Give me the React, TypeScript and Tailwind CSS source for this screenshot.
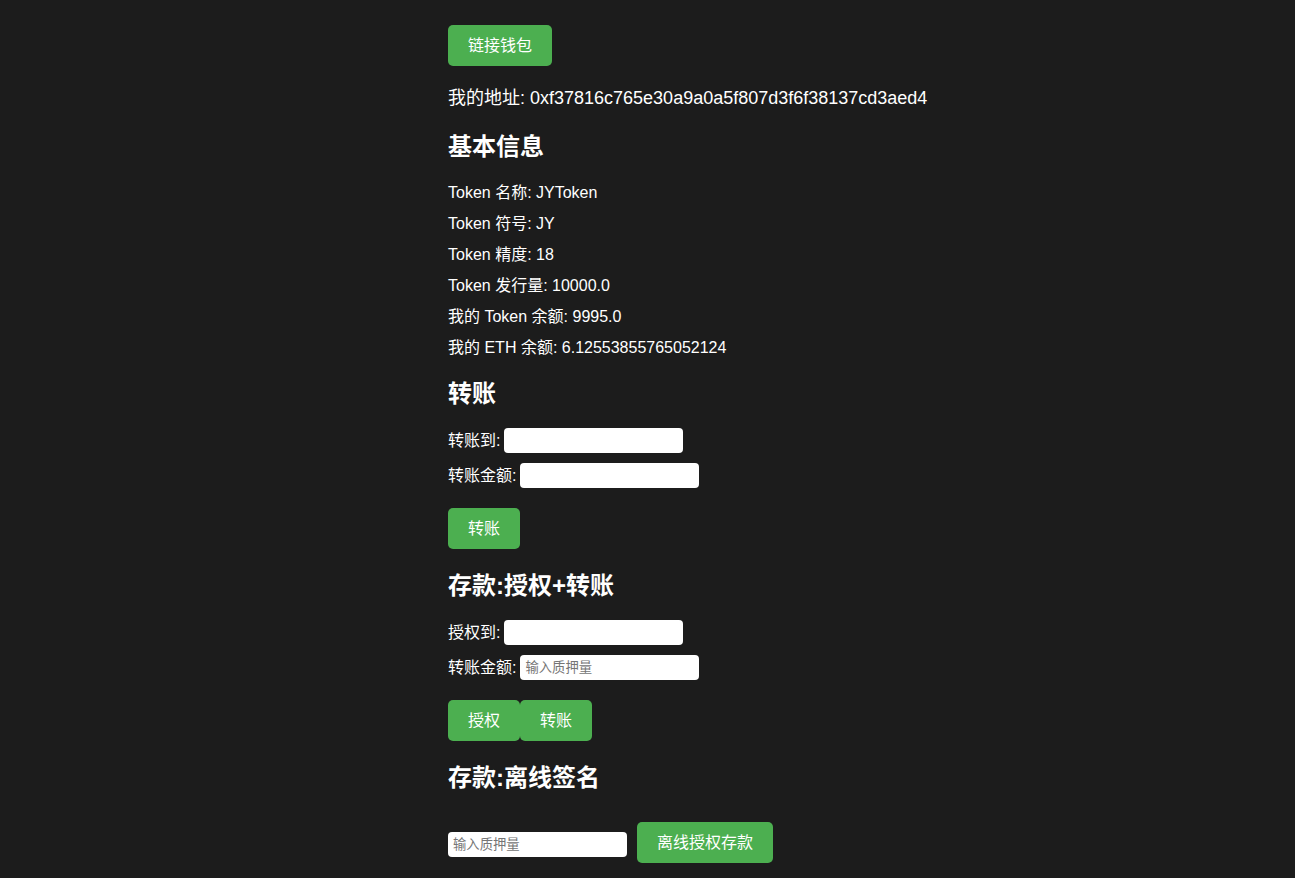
import React from "react";

const infoRows = [
  "Token 名称: JYToken",
  "Token 符号: JY",
  "Token 精度: 18",
  "Token 发行量: 10000.0",
  "我的 Token 余额: 9995.0",
  "我的 ETH 余额: 6.12553855765052124",
];

const btn =
  "bg-[#4caf50] text-white text-[16px] leading-[21px] py-[10px] px-[20px] rounded-[5px] whitespace-nowrap";
const input =
  "w-[179px] h-[25px] bg-white rounded-[4px] px-[5px] text-[13.33px] text-black placeholder:text-[#757575] outline-none";
const h2 = "text-[24px] leading-[32px] font-bold";

function Field({ label, placeholder }: { label: string; placeholder?: string }) {
  return (
    <div className="h-[25px] flex items-center text-[16px] whitespace-nowrap">
      <span>{label}</span>
      <input className={`${input} ml-[4px]`} placeholder={placeholder} />
    </div>
  );
}

export default function App() {
  return (
    <main className="min-h-screen bg-[#1c1c1c] text-white font-['Liberation_Sans','Noto_Sans_CJK_SC',sans-serif] pb-[40px]">
      <div className="mx-auto w-[399px] pt-[25px] flex flex-col items-start">
        <button className={btn}>链接钱包</button>

        <p className="mt-[20px] text-[18px] leading-[24px] whitespace-nowrap">
          我的地址: 0xf37816c765e30a9a0a5f807d3f6f38137cd3aed4
        </p>

        <h2 className={`${h2} mt-[21px]`}>基本信息</h2>
        <div className="mt-[14px] flex flex-col">
          {infoRows.map((row) => (
            <p key={row} className="text-[16px] leading-[31px] whitespace-nowrap">
              {row}
            </p>
          ))}
        </div>

        <h2 className={`${h2} mt-[15px]`}>转账</h2>
        <div className="mt-[18px] flex flex-col gap-[10px]">
          <Field label="转账到:" />
          <Field label="转账金额:" />
        </div>
        <button className={`${btn} mt-[20px]`}>转账</button>

        <h2 className={`${h2} mt-[21px]`}>存款:授权+转账</h2>
        <div className="mt-[18px] flex flex-col gap-[10px]">
          <Field label="授权到:" />
          <Field label="转账金额:" placeholder="输入质押量" />
        </div>
        <div className="mt-[20px] flex">
          <button className={btn}>授权</button>
          <button className={btn}>转账</button>
        </div>

        <h2 className={`${h2} mt-[21px]`}>存款:离线签名</h2>
        <div className="mt-[28px] flex items-start gap-[10px]">
          <input className={`${input} mt-[10px]`} placeholder="输入质押量" />
          <button className={btn}>离线授权存款</button>
        </div>
      </div>
    </main>
  );
}
